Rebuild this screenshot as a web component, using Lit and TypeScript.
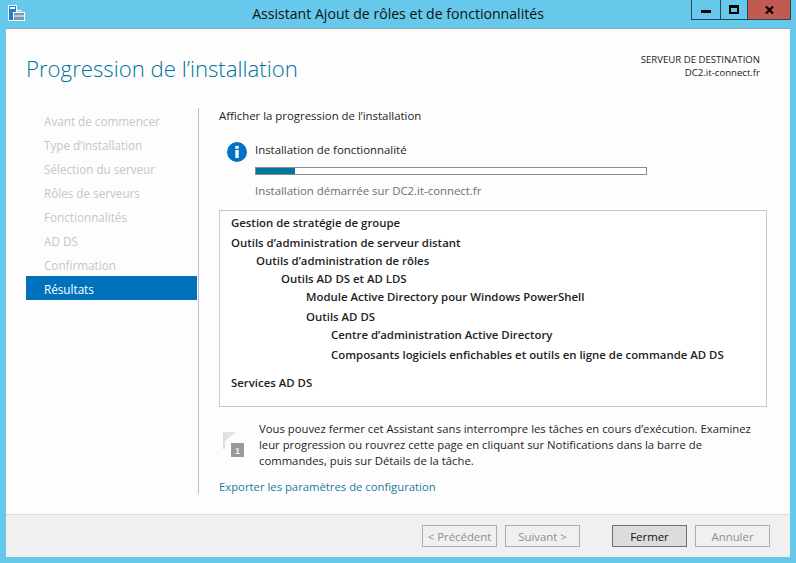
import { LitElement, html, css } from "lit";
import { customElement } from "lit/decorators.js";

const NAV = ["Avant de commencer","Type d’installation","Sélection du serveur","Rôles de serveurs","Fonctionnalités","AD DS","Confirmation"];
const TREE: [number,string,string][] = [
  [0,"Gestion de stratégie de groupe","r20"],
  [0,"Outils d’administration de serveur distant","r18"],
  [1,"Outils d’administration de rôles","r18"],
  [2,"Outils AD DS et AD LDS","r18"],
  [3,"Module Active Directory pour Windows PowerShell","r20"],
  [3,"Outils AD DS","r18"],
  [4,"Centre d’administration Active Directory","r20"],
  [4,"Composants logiciels enfichables et outils en ligne de commande AD DS","r28"],
  [0,"Services AD DS","r18"],
];

@customElement("app-root")
export class AppRoot extends LitElement {
  static styles = css`
    :host { display:block; width:796px; height:563px; background:#66c9ec; overflow:hidden;
      font-family:"Open Sans","Noto Sans",sans-serif; font-size:11.4px; color:#1e1e1e; }
    .titlebar { height:29px; display:flex; position:relative; }
    .appicon { margin:3px 0 0 8px; width:17px; height:18px; }
    .title { position:absolute; left:0; right:0; top:5px; text-align:center; font-size:14.1px; line-height:18px; color:#111; }
    .controls { position:absolute; top:0; left:691px; display:flex; height:20px; border:1px solid #24485a; border-top:0; box-sizing:border-box; width:100px; }
    .ctl { display:flex; align-items:center; justify-content:center; width:28px; border-right:1px solid #24485a; }
    .ctl.max-c { width:26px; }
    .ctl.close { flex:1; border-right:0; background:#c15a50; }
    .min { width:10px; height:3px; background:#000; margin-top:4px; }
    .max { width:6px; height:4px; border:2px solid #000; border-top-width:3px; }
    .client { margin:0 6px; height:528px; background:#fdfdfd; display:flex; flex-direction:column; box-shadow:0 -1px 0 #8fa9b5; }
    .head { height:79px; display:flex; justify-content:space-between; padding:0 30px 0 20px; flex:none; }
    h1 { margin:22px 0 0; font-weight:300; font-size:22.2px; line-height:36px; color:#00749e; }
    .dest { margin-top:24px; text-align:right; font-size:9.6px; line-height:13px; color:#222; }
    .main { flex:1; display:flex; min-height:0; }
    .nav { width:171px; margin-left:20px; flex:none; }
    .nav div { height:24px; line-height:26px; padding-left:18px; color:#c6c6c6; font-size:11.7px; }
    .nav div.on { background:#0072bc; color:#fff; }
    .rule { width:1px; background:#bdbdbd; height:386px; margin-left:1px; flex:none; }
    .content { margin-left:20px; width:548px; display:flex; flex-direction:column; }
    .lead { line-height:16px; }
    .status { display:flex; margin:17px 0 0 8px; }
    .info { width:20px; height:20px; flex:none; margin-top:1px; }
    .stcol { margin-left:8px; }
    .stcol .t { line-height:17px; }
    .bar { width:392px; height:8px; box-sizing:border-box; border:1px solid #8c8c8c; margin-top:9px; background:#fff; }
    .fill { height:100%; background:#00759a; }
    .stcol .s { line-height:17px; color:#6d6d6d; margin-top:7px; }
    .tree { margin-top:11px; height:197px; box-sizing:border-box; border:1px solid #c9c9c9; background:#fff; padding:3px 0 0 11px; font-weight:600; color:#222; }
    .tree div { white-space:nowrap; }
    .r20 { height:20px; line-height:18px; } .r18 { height:18px; line-height:18px; } .r28 { height:28px; line-height:18px; }
    .i0{padding-left:0}.i1{padding-left:25px}.i2{padding-left:50px}.i3{padding-left:75px}.i4{padding-left:100px}
    .hint { display:flex; margin-top:14px; font-size:11.3px; }
    .flag { width:22px; height:26px; margin:11px 0 0 4px; flex:none; }
    .flag text { font-family:"Liberation Sans",sans-serif; font-size:9px; font-weight:700; fill:#eee; }
    .hint p { margin:0 0 0 14px; line-height:16px; width:500px; }
    .link { color:#1a7b9e; margin-top:10px; line-height:16px; font-size:11.3px; }
    .foot { height:43px; flex:none; box-sizing:border-box; background:#f0f0f0; border-top:1px solid #dcdcdc; display:flex; padding:10px 0 0 416px; }
    .btn { width:75px; height:22px; box-sizing:border-box; border:1px solid #adadad; background:#f0f0f0; color:#8f8f8f; text-align:center; line-height:21px; margin-right:8px; }
    .btn.primary { border-color:#707070; background:#dcdcdc; color:#111; margin-left:24px; }
  `;
  render() {
    return html`
      <div class="titlebar">
        <svg class="appicon" viewBox="0 0 17 18">
          <rect x="0.5" y="2.5" width="8" height="15" fill="#1d7fd0" stroke="#fff"/>
          <rect x="2" y="4" width="5" height="2" fill="#fff"/>
          <rect x="5.5" y="9.5" width="11" height="8" fill="#7f98ad" stroke="#fff"/>
          <path d="M9 9.5V7.5h4v2" fill="none" stroke="#fff"/>
          <path d="M6 13h10" stroke="#fff"/>
        </svg>
        <div class="title">Assistant Ajout de rôles et de fonctionnalités</div>
        <div class="controls">
          <div class="ctl"><div class="min"></div></div>
          <div class="ctl max-c"><div class="max"></div></div>
          <div class="ctl close"><svg width="9" height="8" viewBox="0 0 9 8"><path d="M1 0.5L8 7.5M8 0.5L1 7.5" stroke="#000" stroke-width="2.2"/></svg></div>
        </div>
      </div>
      <div class="client">
        <div class="head">
          <h1>Progression de l’installation</h1>
          <div class="dest">SERVEUR DE DESTINATION<br>DC2.it-connect.fr</div>
        </div>
        <div class="main">
          <div class="nav">
            ${NAV.map(n => html`<div>${n}</div>`)}
            <div class="on">Résultats</div>
          </div>
          <div class="rule"></div>
          <div class="content">
            <div class="lead">Afficher la progression de l’installation</div>
            <div class="status">
              <svg class="info" viewBox="0 0 20 20"><circle cx="10" cy="10" r="10" fill="#0072c6"/><rect x="8.3" y="8" width="3.4" height="8" fill="#fff"/><rect x="8.3" y="3.8" width="3.4" height="3" fill="#fff"/></svg>
              <div class="stcol">
                <div class="t">Installation de fonctionnalité</div>
                <div class="bar"><div class="fill" style="width:10%"></div></div>
                <div class="s">Installation démarrée sur DC2.it-connect.fr</div>
              </div>
            </div>
            <div class="tree">
              ${TREE.map(([i,t,r]) => html`<div class="i${i} ${r}">${t}</div>`)}
            </div>
            <div class="hint">
              <svg class="flag" viewBox="0 0 22 26">
                <path d="M0 0h2v17H0z" fill="#dcdcdc"/>
                <path d="M2 0h11L2 9z" fill="#e2e2e2"/>
                <rect x="8" y="11" width="13" height="14" fill="#9a9a9a"/>
                <text x="12" y="22">1</text>
              </svg>
              <p>Vous pouvez fermer cet Assistant sans interrompre les tâches en cours d’exécution. Examinez leur progression ou rouvrez cette page en cliquant sur Notifications dans la barre de commandes, puis sur Détails de la tâche.</p>
            </div>
            <div class="link">Exporter les paramètres de configuration</div>
          </div>
        </div>
        <div class="foot">
          <div class="btn">&lt; Précédent</div>
          <div class="btn">Suivant &gt;</div>
          <div class="btn primary">Fermer</div>
          <div class="btn">Annuler</div>
        </div>
      </div>
    `;
  }
}
